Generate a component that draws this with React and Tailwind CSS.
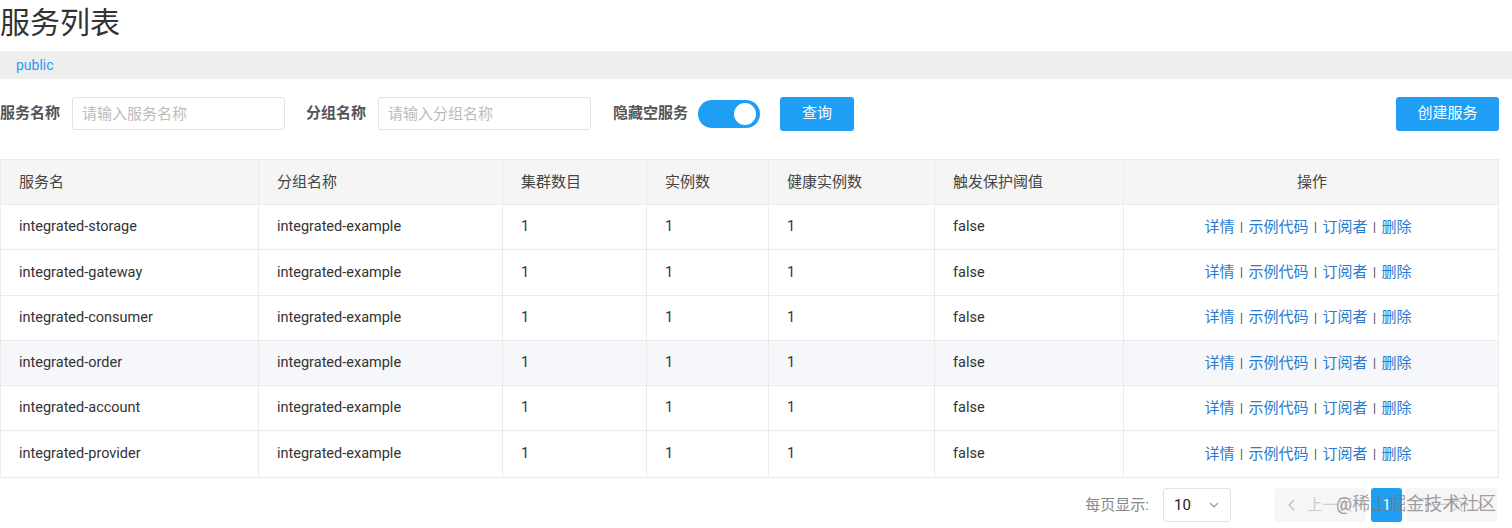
import React from 'react';

const FONT = { fontFamily: 'Roboto, "Noto Sans CJK SC", sans-serif' };

const services = [
  'integrated-storage',
  'integrated-gateway',
  'integrated-consumer',
  'integrated-order',
  'integrated-account',
  'integrated-provider',
];

const cols = 'grid grid-cols-[258px_244px_144px_122px_166px_189px_376px]';
const cell = 'flex items-center px-[18px] border-r border-[#ebebeb] last:border-r-0';

const Sep = () => <span className="mx-[5.5px] text-[#444] text-[12px]">|</span>;

const ServiceList = () => {
  return (
    <div className="relative w-[1512px] h-[528px] bg-white text-[#333] overflow-hidden" style={FONT}>
      <h1 className="text-[30px] leading-[46px] text-[#333] font-normal">服务列表</h1>

      <div className="mt-[5px] h-[28px] bg-[#eeeeee] flex items-center px-[16px] text-[14px] text-[#2a9bf2]">
        public
      </div>

      {/* filter bar */}
      <div className="mt-[17px] h-[35px] flex items-center text-[15px]">
        <span className="font-bold text-[#555] w-[72px]">服务名称</span>
        <input
          className="w-[213px] h-[33px] border border-[#e2e2e2] rounded-[3px] px-[9px] text-[15px] outline-none placeholder:text-[#bbb]"
          placeholder="请输入服务名称"
        />
        <span className="font-bold text-[#555] ml-[21px] w-[72px]">分组名称</span>
        <input
          className="w-[213px] h-[33px] border border-[#e2e2e2] rounded-[3px] px-[9px] text-[15px] outline-none placeholder:text-[#bbb]"
          placeholder="请输入分组名称"
        />
        <span className="font-bold text-[#555] ml-[22px]">隐藏空服务</span>
        <div className="ml-[10px] w-[62px] h-[28px] rounded-full bg-[#1e9ef4] flex items-center justify-end pr-[2px]">
          <div className="w-[26px] h-[26px] rounded-full bg-white border-2 border-[#1e9ef4]" />
        </div>
        <button className="ml-[20px] w-[74px] h-[34px] rounded-[3px] bg-[#1e9ef4] text-white text-[15px]">查询</button>
        <div className="flex-1" />
        <button className="mr-[13px] w-[103px] h-[34px] rounded-[3px] bg-[#1e9ef4] text-white text-[15px]">创建服务</button>
      </div>

      {/* table */}
      <div className="mt-[28px] w-[1499px] border border-[#ebebeb] text-[14.5px]">
        <div className={`${cols} h-[45px] bg-[#f5f5f5] border-b border-[#ebebeb] text-[#444] text-[15px]`}>
          <div className={cell}>服务名</div>
          <div className={cell}>分组名称</div>
          <div className={cell}>集群数目</div>
          <div className={cell}>实例数</div>
          <div className={cell}>健康实例数</div>
          <div className={cell}>触发保护阈值</div>
          <div className={`${cell} justify-center`}>操作</div>
        </div>
        {services.map((name, i) => (
          <div
            key={name}
            className={`${cols} h-[45.3px] border-b border-[#ebebeb] last:border-b-0 ${i === 3 ? 'bg-[#f5f7fa]' : ''}`}
          >
            <div className={cell}>{name}</div>
            <div className={cell}>integrated-example</div>
            <div className={cell}>1</div>
            <div className={cell}>1</div>
            <div className={cell}>1</div>
            <div className={cell}>false</div>
            <div className={`${cell} justify-center pr-[26px] text-[15px] text-[#2a7bd0]`}>
              <span>详情</span>
              <Sep />
              <span>示例代码</span>
              <Sep />
              <span>订阅者</span>
              <Sep />
              <span>删除</span>
            </div>
          </div>
        ))}
      </div>

      {/* pagination */}
      <div className="mt-[10px] flex items-center justify-end pr-[15px] text-[15px]">
        <span className="text-[#888] mr-[14px]">每页显示:</span>
        <div className="w-[68px] h-[34px] border border-[#e2e2e2] rounded-[3px] flex items-center justify-between px-[10px] mr-[43px]">
          <span className="text-[#222] text-[15px]">10</span>
          <svg width="12" height="12" viewBox="0 0 12 12" fill="none" stroke="#999" strokeWidth="1.2">
            <path d="M2 4l4 4 4-4" />
          </svg>
        </div>
        <div className="w-[92px] h-[34px] rounded-[3px] bg-[#f6f6f6] flex items-center justify-center text-[#ccc] gap-[10px]">
          <svg width="10" height="12" viewBox="0 0 10 12" fill="none" stroke="#bbb" strokeWidth="1.2">
            <path d="M7 1L2 6l5 5" />
          </svg>
          <span>上一页</span>
        </div>
        <div className="ml-[5px] w-[31px] h-[34px] rounded-[3px] bg-[#1e9ef4] text-white flex items-center justify-center">1</div>
        <div className="ml-[4px] w-[91px] h-[34px] rounded-[3px] bg-[#f6f6f6] flex items-center justify-center text-[#ccc] gap-[10px]">
          <span>下一页</span>
          <svg width="10" height="12" viewBox="0 0 10 12" fill="none" stroke="#bbb" strokeWidth="1.2">
            <path d="M3 1l5 5-5 5" />
          </svg>
        </div>
      </div>

      {/* watermark */}
      <div className="absolute left-[1336px] top-[491px] text-[18px] leading-[26px] text-[#777]/70 pointer-events-none">
        @稀土掘金技术社区
      </div>
    </div>
  );
};

export default function App() {
  return <ServiceList />;
}
